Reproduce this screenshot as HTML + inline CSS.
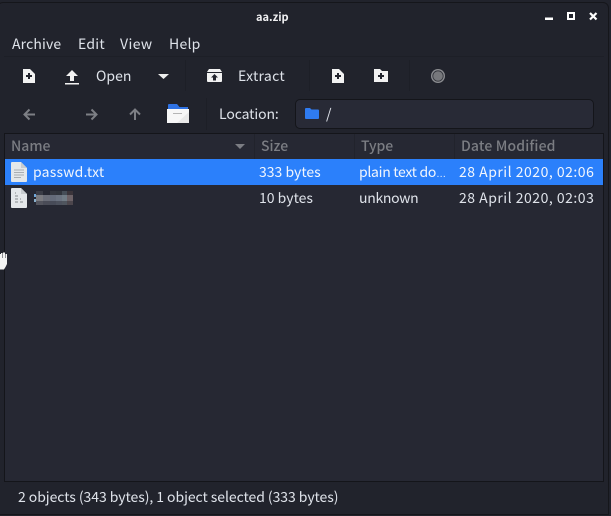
<!DOCTYPE html>
<html><head><meta charset="utf-8">
<style>
html,body{margin:0;padding:0;background:#21232c;}
#w{position:relative;width:611px;height:516px;overflow:hidden;background:#21232c;font-family:"Noto Sans CJK JP","Liberation Sans",sans-serif;color:#dfe3ea;font-size:14px;line-height:20px;}
.t{position:absolute;white-space:nowrap;}
.b{position:absolute;}
svg{position:absolute;overflow:visible;}
</style></head><body>
<div id="w">
<div class="b" style="left:-3px;top:2px;width:612px;height:513px;box-sizing:border-box;border:1px solid #15161b;border-radius:6px 6px 0 0"></div>

<div class="t" style="left:256px;top:7px;font-size:11px;font-weight:700;color:#f0f0f2">aa.zip</div>
<svg style="left:0;top:0" width="611" height="130">
<path d="M545 17.500h8v2.500h-8z" fill="#fff"/>
<path d="M567 12h8v8h-8z M569 14v4h4v-4z" fill="#fff" fill-rule="evenodd"/>
<path d="M590 13l6.500 6.500M596.500 13l-6.500 6.500" stroke="#fff" stroke-width="2.200"/>
<path d="M4 56.500H604" stroke="#1d1f27"/>
<path d="M185.500 60V91M309.500 60V91M409.500 60V91M206.500 98V130" stroke="#1d1f27"/>
<!-- new -->
<path d="M23 69h7l5 5v9H23z" fill="#f2f2f2"/><path d="M29 73v6M26 76h6" stroke="#22242d" stroke-width="2"/>
<!-- open -->
<path d="M72 70l-6 6h4v5h4v-5h4z" fill="#f2f2f2"/><path d="M65 83h14v1.500H65z" fill="#f2f2f2"/>
<path d="M158 74h11l-5.500 5z" fill="#eee"/>
<!-- extract -->
<path d="M209 69h11l2 3v9a1 1 0 0 1-1 1h-13a1 1 0 0 1-1-1v-9z" fill="#f2f2f2"/><path d="M207 72.500h15" stroke="#22242d"/><path d="M214.500 74l-3.500 3.500h2v3h3v-3h2z" fill="#22242d"/>
<!-- add file / folder -->
<path d="M332 69h7l5 5v9h-12z" fill="#f2f2f2"/><path d="M338 73v6M335 76h6" stroke="#22242d" stroke-width="2"/>
<path d="M374 69h6l2 2h6v11h-14z" fill="#f2f2f2"/><path d="M381 73v6M378 76h6" stroke="#22242d" stroke-width="2"/>
<!-- stop -->
<circle cx="438" cy="76" r="7" fill="#8b8c90"/><circle cx="438" cy="76" r="5.200" fill="#77787c" stroke="#30323a" stroke-width=".8"/>
<!-- nav -->
<path d="M35 114.500H25M29.500 109.500l-5 5 5 5" fill="none" stroke="#7d7f85" stroke-width="2"/>
<path d="M86 114.500h10M91.500 109.500l5 5-5 5" fill="none" stroke="#7d7f85" stroke-width="2"/>
<path d="M135 120v-10M130 114.500l5-5 5 5" fill="none" stroke="#7d7f85" stroke-width="2"/>
<!-- folder -->
<path d="M168 105q0-1 1-1h8l2.500 3H188v2.500h-20z" fill="#2f72e4"/>
<path d="M167 109h22v14h-22z" fill="#f7f7f7"/><path d="M173 113h9v1h-9z" fill="#b5b5b5"/><path d="M189 112v11h-12z" fill="#e9e9e9"/>
</svg>

<div class="t" style="left:12px;top:34px;letter-spacing:.15px">Archive</div>
<div class="t" style="left:78px;top:34px;letter-spacing:.25px">Edit</div>
<div class="t" style="left:120px;top:34px;letter-spacing:.4px">View</div>
<div class="t" style="left:169px;top:34px;letter-spacing:.25px">Help</div>
<div class="t" style="left:96px;top:66px">Open</div>
<div class="t" style="left:238px;top:66px;letter-spacing:.3px">Extract</div>
<div class="t" style="left:219px;top:104px;letter-spacing:-.1px">Location:</div>

<div class="b" style="left:295px;top:99px;width:299px;height:30px;box-sizing:border-box;border:1px solid #14151a;border-radius:5px;background:#282a36"></div>
<svg style="left:305px;top:108px" width="14" height="12"><path d="M0 1q0-1 1-1h4l1.500 1.500H13q1 0 1 1V10q0 1-1 1H1q-1 0-1-1z" fill="#2f7bf0"/></svg>
<div class="t" style="left:326px;top:104px">/</div>

<div class="b" style="left:4px;top:133px;width:600px;height:349px;box-sizing:border-box;border:1px solid #14151a;background:#262833"></div>
<div class="b" style="left:254px;top:134px;width:1px;height:25px;background:#21232c"></div>
<div class="b" style="left:354px;top:134px;width:1px;height:25px;background:#21232c"></div>
<div class="b" style="left:454px;top:134px;width:1px;height:25px;background:#21232c"></div>
<div class="t" style="left:11px;top:136px;color:#7b7d83;font-weight:500">Name</div>
<div class="t" style="left:261px;top:136px;color:#7b7d83;font-weight:500">Size</div>
<div class="t" style="left:361px;top:136px;color:#7b7d83;font-weight:500;letter-spacing:-.1px">Type</div>
<div class="t" style="left:461px;top:136px;color:#7b7d83;font-weight:500;letter-spacing:.15px">Date Modified</div>
<svg style="left:235px;top:144px" width="10" height="6"><path d="M0 0h10l-5 5z" fill="#7b7d83"/></svg>

<div class="b" style="left:5px;top:159px;width:598px;height:26px;background:#2b80fb"></div>
<svg style="left:11px;top:162px" width="16" height="20"><path d="M0 1q0-1 1-1h9l6 6v13q0 1-1 1H1q-1 0-1-1z" fill="#e4e7ea"/><path d="M10 0l6 6h-6z" fill="#c8ccd0"/><path d="M3 8h10M3 10.500h10M3 13h10M3 15.500h7" stroke="#a9adb2"/></svg>
<div class="t" style="left:33px;top:162px;color:#f2f6fd;letter-spacing:.2px">passwd.txt</div>
<div class="t" style="left:259px;top:162px;color:#f2f6fd">333 bytes</div>
<div class="t" style="left:359px;top:162px;color:#f2f6fd;letter-spacing:-.3px">plain text do<span style="font-family:'Liberation Sans',sans-serif;font-size:10px;letter-spacing:0">…</span></div>
<div class="t" style="left:459px;top:162px;color:#f2f6fd;letter-spacing:.5px">28 April 2020, 02:06</div>

<svg style="left:11px;top:188px" width="16" height="20"><path d="M0 1q0-1 1-1h9l6 6v13q0 1-1 1H1q-1 0-1-1z" fill="#e4e7ea"/><path d="M10 0l6 6h-6z" fill="#c8ccd0"/><path d="M4 5h1M4 8h3M4 11h3M9 11h1M4 14h3M9 14h3" stroke="#85888c"/></svg>
<svg style="left:34px;top:191px" width="40" height="15" shape-rendering="crispEdges">
<rect x="2" y="0" width="7" height="4" fill="#3a3c46"/>
<rect x="16" y="0" width="6" height="4" fill="#33363f"/>
<rect x="22" y="0" width="6" height="4" fill="#30343c"/>
<rect x="28" y="0" width="5" height="4" fill="#454d57"/>
<rect x="33" y="0" width="6" height="4" fill="#3a343a"/>
<rect x="0" y="3" width="2" height="3" fill="#6fa6d8"/>
<rect x="0" y="8" width="2" height="3" fill="#8ab0cc"/>
<rect x="2" y="4" width="7" height="6" fill="#7a7a7f"/>
<rect x="9" y="4" width="7" height="6" fill="#6a6d78"/>
<rect x="16" y="4" width="6" height="6" fill="#646b7a"/>
<rect x="22" y="4" width="6" height="6" fill="#6a7280"/>
<rect x="28" y="4" width="5" height="6" fill="#707b85"/>
<rect x="33" y="4" width="6" height="6" fill="#6b6166"/>
<rect x="2" y="10" width="7" height="4" fill="#53545d"/>
<rect x="9" y="10" width="7" height="4" fill="#4a4c57"/>
<rect x="16" y="10" width="6" height="4" fill="#474b58"/>
<rect x="22" y="10" width="6" height="4" fill="#4c515d"/>
<rect x="28" y="10" width="5" height="4" fill="#4f555e"/>
<rect x="33" y="10" width="6" height="4" fill="#4c464c"/>
</svg>
<div class="t" style="left:259px;top:188px">10 bytes</div>
<div class="t" style="left:359px;top:188px;letter-spacing:-.3px">unknown</div>
<div class="t" style="left:459px;top:188px;letter-spacing:.5px">28 April 2020, 02:03</div>

<svg style="left:0;top:252px" width="8" height="18"><path d="M0 2h1V1h1.500v5h.5V0.500H5V6h.5V2H7v10L5.500 15 4 17.500H0z" fill="#f4f4f4"/></svg>

<div class="t" style="left:18px;top:487px;letter-spacing:-.06px">2 objects (343 bytes), 1 object selected (333 bytes)</div>
</div>
</body></html>
